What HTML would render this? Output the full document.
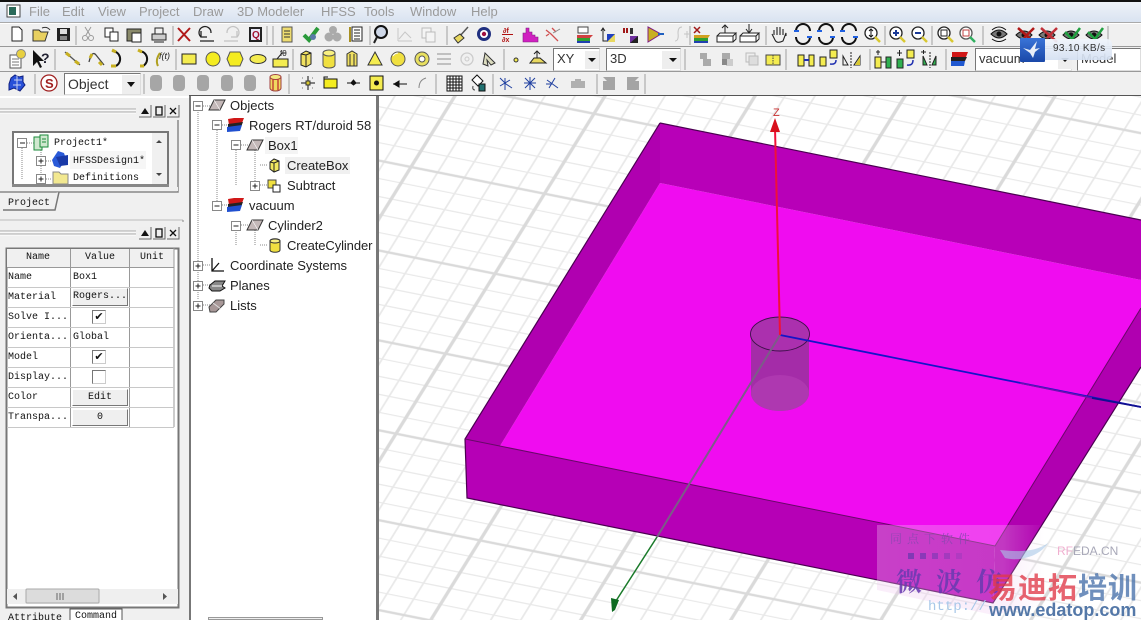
<!DOCTYPE html>
<html><head><meta charset="utf-8"><title>HFSS</title>
<style>
html,body{margin:0;padding:0;width:1141px;height:620px;overflow:hidden;background:#f0f0f0}
#r{position:absolute;left:0;top:0;width:1141px;height:620px;overflow:hidden;background:#f0f0f0;font-family:"Liberation Sans",sans-serif}
.a{position:absolute;white-space:nowrap}
.m{font:13px "Liberation Sans",sans-serif;color:#9a9a9a;top:4px}
.t{font:13px/16px "Liberation Sans",sans-serif;color:#222}
.c{font:10px/12px "Liberation Mono",monospace;color:#111}
.b{background:#efefef;border:1px solid;border-color:#fff #777 #777 #fff;box-sizing:border-box;text-align:center;font:10px/15px "Liberation Mono",monospace;color:#111}
.combo{background:#fff;border:1px solid;border-color:#777 #ddd #ddd #777;box-sizing:border-box;font:13px/20px "Liberation Sans",sans-serif;color:#333;padding-left:3px}
.cb{background:#fff;border:1px solid;border-color:#777 #ccc #ccc #777;box-sizing:border-box;width:14px;height:14px;font:bold 11px/12px "DejaVu Sans",sans-serif;text-align:center;color:#111}
</style></head><body><div id="r">

<!-- menu -->
<div class="a" style="left:0;top:0;width:1141px;height:2px;background:#111"></div>
<div class="a" style="left:0;top:2px;width:1141px;height:20px;background:linear-gradient(#eef2f8,#d9e3f1)"></div>
<div class="a" style="left:0;top:22px;width:1141px;height:1px;background:#aaa"></div>
<div class="a" style="left:0;top:23px;width:1141px;height:1px;background:#fff"></div>
<span class="a m" style="left:29px">File</span><span class="a m" style="left:62px">Edit</span><span class="a m" style="left:98px">View</span><span class="a m" style="left:139px">Project</span><span class="a m" style="left:193px">Draw</span><span class="a m" style="left:237px">3D Modeler</span><span class="a m" style="left:321px">HFSS</span><span class="a m" style="left:364px">Tools</span><span class="a m" style="left:410px">Window</span><span class="a m" style="left:471px">Help</span>

<div class="a" style="left:0;top:46px;width:1141px;height:1px;background:#999"></div>
<div class="a" style="left:0;top:71px;width:1141px;height:1px;background:#999"></div>

<!-- combos -->
<div class="a combo" style="left:553px;top:48px;width:47px;height:23px">XY</div>
<div class="a combo" style="left:606px;top:48px;width:75px;height:23px">3D</div>
<div class="a combo" style="left:975px;top:48px;width:97px;height:23px">vacuum</div>
<div class="a combo" style="left:1077px;top:48px;width:64px;height:23px">Model</div>
<div class="a combo" style="left:64px;top:73px;width:77px;height:22px;font-size:14px">Object</div>

<!-- viewport -->
<svg class="a" style="left:378px;top:96px" width="763" height="524" viewBox="378 96 763 524">
<defs>
<pattern id="g" patternUnits="userSpaceOnUse" width="5" height="5" patternTransform="matrix(26.7 5.34 -9.9 16 411 167)">
<path d="M0 1H5M0 2H5M0 3H5M0 4H5M1 0V5M2 0V5M3 0V5M4 0V5" stroke="#e9e9e9" stroke-width=".07" fill="none"/>
<path d="M0 0H5M0 5H5M0 0V5M5 0V5" stroke="#dadada" stroke-width=".13" fill="none"/>
</pattern>
<linearGradient id="wm" x1="0" x2="1" y1="0" y2="0"><stop offset="0" stop-color="#f0c8f0" stop-opacity=".32"/><stop offset=".75" stop-color="#f0c8f0" stop-opacity=".28"/><stop offset="1" stop-color="#f0c8f0" stop-opacity="0"/></linearGradient>
</defs>
<rect x="378" y="96" width="763" height="524" fill="#fff"/>
<rect x="378" y="96" width="763" height="524" fill="url(#g)"/>
<!-- box -->
<polygon points="660,183 1141,280 1141,308 995,546 500,446" fill="#f00cf0"/>
<polygon points="660,123 1141,220 1141,280 660,183" fill="#b800b8"/>
<polygon points="660,123 660,183 500,446 465,439" fill="#b000b0"/>
<polygon points="995,546 1141,308 1141,367 993,603" fill="#b000b0"/>
<polygon points="465,439 995,546 993,603 467,498" fill="#b600b6"/>
<path d="M660 123L1141 220M660 123L465 439L467 498L993 603L1141 367" fill="none" stroke="#4a0050" stroke-width="1.2"/>
<path d="M465 439L995 546L1141 308" fill="none" stroke="#680868" stroke-width="1"/>
<!-- cylinder -->
<path d="M751 335V393A29 18 0 0 0 809 393V335Z" fill="#a42ca8"/>
<ellipse cx="780" cy="393" rx="29" ry="18" fill="#ae38b0"/>
<ellipse cx="780" cy="334" rx="29.500" ry="17" fill="#ab30ae" stroke="#3c1048" stroke-width=".9"/>
<!-- axes -->
<path d="M780 335L1141 407" stroke="#1414c8" stroke-width="1.800" fill="none"/>
<path d="M1020 383L1092 398" stroke="#6a10b0" stroke-width="1.500"/>
<path d="M1092 398L1141 407" stroke="#101090" stroke-width="1.800"/>
<path d="M780 335L657 537" stroke="#7c5c88" stroke-width="2" fill="none"/>
<path d="M657 537L614 604" stroke="#1a7a2a" stroke-width="1.500" fill="none"/>
<path d="M611 598L619 600L615 610L612 612Z" fill="#0c6a20"/>
<path d="M780 335L775 128" stroke="#f01038" stroke-width="2" fill="none"/>
<path d="M775 118L780 132H770Z" fill="#d8101c"/>
<text x="773" y="116" font-family="Liberation Sans" font-size="11" fill="#c83030">Z</text>
<!-- watermark -->
<polygon points="877,525 1045,525 1045,605 993,615 877,590" fill="url(#wm)"/>
<path d="M1000 550C1020 552 1035 552 1048 543C1040 556 1020 562 1005 558Z" fill="#a8c8e8" fill-opacity=".6"/>
<text x="890" y="543" font-family="Noto Serif CJK SC,serif" font-size="12" letter-spacing="5" fill="#8848b0" fill-opacity=".85">同点下软件</text>
<g fill="#7038b0"><rect x="908" y="553" width="6" height="6" opacity=".8"/><rect x="920" y="553" width="6" height="6" opacity=".7"/><rect x="932" y="553" width="6" height="6" opacity=".55"/><rect x="944" y="553" width="6" height="6" opacity=".4"/><rect x="956" y="553" width="6" height="6" opacity=".25"/></g>
<text x="896" y="591" font-family="Noto Serif CJK SC,serif" font-size="26" font-weight="700" letter-spacing="14" fill="#6a3ab0" fill-opacity=".88">微波仿</text>
<text x="1057" y="555" font-family="Liberation Sans" font-size="12"><tspan fill="#f0b0d0">RF</tspan><tspan fill="#a8a8b8">EDA.CN</tspan></text>
<text x="928" y="610" font-family="Liberation Mono" font-size="14" fill="#a8c8e8">http://</text>
<text x="988" y="598" font-family="Noto Sans CJK SC,sans-serif" font-weight="700" font-size="29" letter-spacing="1"><tspan fill="#e03848" fill-opacity=".78">易迪拓</tspan><tspan fill="#4c74ac" fill-opacity=".8">培训</tspan></text>
<text x="989" y="616" font-family="Liberation Sans" font-weight="700" font-size="18" fill="#5478a8">www.edatop.com</text>
<rect x="378" y="96" width="1" height="524" fill="#777"/>
</svg>
<div class="a" style="left:189px;top:95px;width:952px;height:1px;background:#555"></div>

<!-- tree panel -->
<div class="a" style="left:189px;top:96px;width:189px;height:524px;background:#fff;border-left:2px solid #777;border-right:2px solid #777;box-sizing:border-box"></div>
<div class="a" style="left:208px;top:617px;width:115px;height:3px;background:#efefef;border:1px solid #999;box-sizing:border-box"></div>
<div class="a" style="left:285px;top:157px;width:65px;height:17px;background:#f0f0f0"></div>
<div class="a" style="left:265px;top:137px;width:33px;height:17px;background:#f4f4f4"></div>
<span class="a t" style="left:230px;top:98px">Objects</span>
<span class="a t" style="left:249px;top:118px;letter-spacing:.1px">Rogers RT/duroid 58</span>
<span class="a t" style="left:268px;top:138px">Box1</span>
<span class="a t" style="left:287px;top:158px">CreateBox</span>
<span class="a t" style="left:287px;top:178px">Subtract</span>
<span class="a t" style="left:249px;top:198px">vacuum</span>
<span class="a t" style="left:268px;top:218px">Cylinder2</span>
<span class="a t" style="left:287px;top:238px;letter-spacing:-.1px">CreateCylinder</span>
<span class="a t" style="left:230px;top:258px">Coordinate Systems</span>
<span class="a t" style="left:230px;top:278px">Planes</span>
<span class="a t" style="left:230px;top:298px">Lists</span>

<svg class="a" style="left:0;top:96px" width="378" height="230" viewBox="0 96 378 230">
<defs>
<g id="plus"><rect x="-4.500" y="-4.500" width="9" height="9" fill="#fff" stroke="#888"/><path d="M-2.500 0H2.500M0-2.500V2.500" stroke="#222"/></g>
<g id="minus"><rect x="-4.500" y="-4.500" width="9" height="9" fill="#fff" stroke="#888"/><path d="M-2.500 0H2.500" stroke="#222"/></g>
<g id="mat"><path d="M-8-6L-2-7H8L6-2L-7 0Z" fill="#d01818"/><path d="M-8-1L7-3L5 2L-8 3Z" fill="#222"/><path d="M-9 2L6 0L4 6L-9 7Z" fill="#2050d0"/></g>
<g id="obj"><path d="M-8 5L-3-5H8L3 5Z" fill="#c4b8b8" stroke="#333"/><path d="M-3-5L3 5" stroke="#fff" stroke-width=".6"/></g>
</defs>
<path d="M198 110V300M217 130V205M236 150V185M236 230V245M255 150V185M255 230V245M203 106H212M222 125H231M241 145H250M260 165H268M260 185H268M222 205H231M241 225H250M260 245H268M203 265H210M203 285H210M203 305H210" stroke="#888" stroke-dasharray="1 1" fill="none"/>
<use href="#minus" x="198" y="106"/><use href="#minus" x="217" y="125"/><use href="#minus" x="236" y="145"/><use href="#plus" x="255" y="186"/><use href="#minus" x="217" y="206"/><use href="#minus" x="236" y="226"/><use href="#plus" x="198" y="266"/><use href="#plus" x="198" y="286"/><use href="#plus" x="198" y="306"/>
<use href="#obj" x="217" y="105"/><use href="#mat" x="236" y="125"/><use href="#obj" x="255" y="145"/><use href="#mat" x="236" y="205"/><use href="#obj" x="255" y="225"/>
<path d="M270 162L274 159L279 161V170L274 172L270 169Z" fill="#f0e860" stroke="#222"/><path d="M274 163V172M270 162L274 163L279 161" stroke="#222" fill="none"/>
<rect x="268" y="180" width="8" height="8" fill="#f0e040" stroke="#444"/><rect x="273" y="185" width="7" height="7" fill="#fff" stroke="#222"/>
<path d="M270 241C270 238 280 238 280 241V250C280 253 270 253 270 250Z" fill="#f0e040" stroke="#333"/><ellipse cx="275" cy="241" rx="5" ry="2" fill="#f8f080" stroke="#333"/>
<path d="M212 258V271H224M212 271L219 263" stroke="#111" stroke-width="1.300" fill="none"/>
<path d="M210 285L215 281H225L222 286L225 288L220 291H212L209 288Z" fill="#888" stroke="#111"/><path d="M212 286H222" stroke="#fff"/>
<path d="M209 307L216 300H224V304L216 312H210Z" fill="#a89898" stroke="#444"/><path d="M213 303L221 309" stroke="#ddd"/>
</svg>

<!-- left dock -->
<div class="a" style="left:0;top:96px;width:189px;height:2px;background:#fff"></div>
<svg class="a" style="left:0;top:96px" width="189" height="524" viewBox="0 96 189 524">
<defs>
<g id="gr"><path d="M0 0H136M0 3H136" stroke="#aaa"/><path d="M0 1H136M0 4H136" stroke="#fff"/></g>
<g id="wbtn"><rect x="-6" y="-6" width="12" height="12" fill="#efefef"/><path d="M-6 6H6V-6" stroke="#666" fill="none"/></g>
<g id="p2"><rect x="-4.500" y="-4.500" width="9" height="9" fill="#fff" stroke="#888"/><path d="M-2.500 0H2.500M0-2.500V2.500" stroke="#222"/></g>
</defs>
<use href="#gr" y="109"/><use href="#gr" y="231"/>
<use href="#wbtn" x="145" y="111"/><use href="#wbtn" x="159" y="111"/><use href="#wbtn" x="173" y="111"/>
<use href="#wbtn" x="145" y="233"/><use href="#wbtn" x="159" y="233"/><use href="#wbtn" x="173" y="233"/>
<g id="wb"><path d="M141 114L145 108L149 114Z" fill="#111"/><rect x="156" y="107" width="6" height="8" fill="none" stroke="#111" stroke-width="1.300"/><path d="M170 108L176 114M176 108L170 114" stroke="#111" stroke-width="1.300"/></g>
<path d="M141 236L145 230L149 236Z" fill="#111"/><rect x="156" y="229" width="6" height="8" fill="none" stroke="#111" stroke-width="1.300"/><path d="M170 230L176 236M176 230L170 236" stroke="#111" stroke-width="1.300"/>
<path d="M0 220H183" stroke="#bbb"/><path d="M183 220V222" stroke="#888"/>
<!-- project frame -->
<path d="M0 192H178V120" fill="none" stroke="#888" stroke-width="1.500"/>
<rect x="13" y="132" width="155" height="53" fill="#fff" stroke="#777" stroke-width="2"/>
<rect x="152" y="133" width="15" height="51" fill="#f0f0f0"/>
<path d="M156 143L159 140L162 143Z M156 173L159 176L162 173Z" fill="#444"/>
<rect x="70" y="151" width="76" height="18" fill="#f6f6f6"/>
<path d="M22 148V180M41 146V180M27 143H34M46 161H52M46 179H52" stroke="#888" stroke-dasharray="1 1" fill="none"/>
<rect x="17.500" y="138.500" width="9" height="9" fill="#fff" stroke="#888"/><path d="M20 143H25" stroke="#222"/>
<use href="#p2" x="41" y="161"/><use href="#p2" x="41" y="179"/>
<path d="M34 137H42V150H34Z" fill="#cfe8cf" stroke="#1a8a3a"/><path d="M40 135H48V147H40Z" fill="#cfe8cf" stroke="#1a8a3a"/><path d="M42 139H46M42 142H46" stroke="#1a8a3a"/>
<path d="M58 151L64 153L66 159L60 168L54 166L52 160Z" fill="#2a5ad8"/><path d="M56 157L68 155V165L60 166Z" fill="#1a3aa8"/>
<path d="M53 172H59L61 174H68V184H53Z" fill="#f2e890" stroke="#888"/>
<rect x="12" y="184" width="157" height="3" fill="#888"/><rect x="13" y="187" width="165" height="4" fill="#f0f0f0"/>
<!-- project tab -->
<path d="M3 210H55L59 192" fill="#f0f0f0" stroke="#777" stroke-width="1.500"/>
<!-- attr frame -->
<rect x="6.500" y="248.500" width="172" height="359" fill="#fff" stroke="#777" stroke-width="2"/>
<rect x="7" y="249" width="167" height="18" fill="#f0f0f0"/>
<path d="M7 267.500H174M70.500 249V427M129.500 249V427M174 248V427" stroke="#999"/>
<path d="M7 287.500H174M7 307.500H174M7 327.500H174M7 347.500H174M7 367.500H174M7 387.500H174M7 407.500H174M7 427.500H174" stroke="#c8c8c8"/>
<!-- scrollbar -->
<rect x="7" y="589" width="171" height="15" fill="#efefef"/>
<rect x="26" y="589" width="73" height="14" rx="1" fill="#dcdcdc" stroke="#aaa"/>
<path d="M57 593V600M60 593V600M63 593V600" stroke="#666"/>
<path d="M17 593L13 596.500L17 600Z M163 593L167 596.500L163 600Z" fill="#555"/>
<!-- tabs -->
<path d="M70 620V609H122V620" fill="#fff" stroke="#555"/>
</svg>

<!-- project text -->
<span class="a c" style="left:54px;top:138px">Project1*</span>
<span class="a c" style="left:73px;top:156px">HFSSDesign1*</span>
<div class="a" style="left:14px;top:170px;width:138px;height:14px;overflow:hidden"><span class="a c" style="left:59px;top:3px">Definitions</span></div>
<span class="a c" style="left:8px;top:198px">Project</span>

<span class="a c" style="left:26px;top:252px">Name</span><span class="a c" style="left:85px;top:252px">Value</span><span class="a c" style="left:140px;top:252px">Unit</span>
<span class="a c" style="left:8px;top:272px">Name</span><span class="a c" style="left:73px;top:272px">Box1</span>
<span class="a c" style="left:8px;top:292px">Material</span>
<span class="a c" style="left:8px;top:312px">Solve I...</span>
<span class="a c" style="left:8px;top:332px">Orienta...</span><span class="a c" style="left:73px;top:332px">Global</span>
<span class="a c" style="left:8px;top:352px">Model</span>
<span class="a c" style="left:8px;top:372px">Display...</span>
<span class="a c" style="left:8px;top:392px">Color</span>
<span class="a c" style="left:8px;top:412px">Transpa...</span>
<div class="a b" style="left:72px;top:288px;width:56px;height:18px">Rogers...</div>
<div class="a b" style="left:72px;top:389px;width:56px;height:17px">Edit</div>
<div class="a b" style="left:72px;top:409px;width:56px;height:17px">0</div>
<div class="a cb" style="left:92px;top:310px">✔</div>
<div class="a cb" style="left:92px;top:350px">✔</div>
<div class="a cb" style="left:92px;top:370px"></div>
<span class="a c" style="left:8px;top:613px">Attribute</span>
<span class="a c" style="left:75px;top:611px">Command</span>

<!-- toolbars -->
<svg class="a" style="left:0;top:0" width="1141" height="96" viewBox="0 0 1141 96" font-family="Liberation Sans">
<defs>
<g id="mg"><circle cx="-1" cy="-1" r="6" fill="#fff" stroke="#222" stroke-width="1.300"/><path d="M3 3L8 8" stroke="#d8c830" stroke-width="2.500"/></g>
<rect id="pill" x="-6" y="-8" width="12" height="16" rx="4" fill="#a6a6a6"/>
<g id="rc"><path d="M-7-3A7 7 0 0 1 7-3M-7 3A7 7 0 0 0 7 3" stroke="#111" stroke-width="2" fill="none"/><path d="M-9-3H-4M4 3H9" stroke="#2060e0" stroke-width="2"/></g>
<g id="lay"><path d="M-8-7H8L6-2H-8Z" fill="#d01818"/><path d="M-9-2H7L5 2H-9Z" fill="#222"/><path d="M-9 2H5L4 7H-9Z" fill="#2058d0"/></g>
<g id="eyex"><path d="M-8 0Q0-8 8 0Q0 8-8 0Z" fill="#777" stroke="#111"/><circle r="2.500" fill="#111"/></g>
</defs>
<!-- separators -->
<path d="M76 26V45M173 26V45M267 26V45M273 26V45M370 26V45M447 26V45M690 26V45M766 26V45M885 26V45M932 26V45M983 26V45M1108 26V45
M55 49V70M176 49V70M293 49V70M504 49V70M685 49V70M786 49V70M870 49V70M946 49V70
M35 74V94M144 74V94M289 74V94M436 74V94M493 74V94M597 74V94M645 74V94" stroke="#bbb" stroke-width="1.500"/>
<!-- title icon -->
<rect x="7" y="5" width="13" height="12" fill="#fff" stroke="#444"/><rect x="9" y="7" width="7" height="8" fill="#2a6a5a"/>
<!-- ROW 1 -->
<path d="M12 27H19L22 30V41H12Z" fill="#fff" stroke="#222"/>
<path d="M33 30H39L41 32H48L45 41H33Z" fill="#e8d060" stroke="#333"/><path d="M42 28Q47 26 50 30" stroke="#333" fill="none"/>
<rect x="57" y="28" width="13" height="13" fill="#222"/><rect x="60" y="29" width="7" height="5" fill="#ddd"/><rect x="60" y="36" width="7" height="4" fill="#888"/>
<path d="M85 27L90 35M91 27L86 35" stroke="#999"/><circle cx="85" cy="38" r="2.500" fill="none" stroke="#999"/><circle cx="91" cy="38" r="2.500" fill="none" stroke="#999"/>
<rect x="105" y="28" width="8" height="9" fill="#fff" stroke="#222"/><rect x="110" y="32" width="8" height="9" fill="#fff" stroke="#222"/>
<rect x="127" y="29" width="14" height="12" fill="#8a8a6a" stroke="#222"/><rect x="132" y="33" width="9" height="9" fill="#fff" stroke="#222"/>
<path d="M152 34H166V40H152Z" fill="#ccc" stroke="#222"/><path d="M155 34V28H163V34M154 42H164" stroke="#222" fill="none"/>
<path d="M178 28L190 41M190 28L178 41" stroke="#b01818" stroke-width="2"/>
<path d="M201 37A6 6 0 1 1 211 33M201 31V37H207M200 41H214" stroke="#222" stroke-width="1.300" fill="none"/>
<path d="M237 37A6 6 0 1 0 227 33M237 31V37H231M224 41H238" stroke="#c4c4c4" stroke-width="1.300" fill="none"/>
<rect x="249" y="27" width="13" height="15" fill="#222"/><rect x="251" y="29" width="9" height="11" fill="#e8e8f8"/><text x="252" y="38" font-size="10" font-weight="700" fill="#a01030">Q</text>
<rect x="282" y="27" width="10" height="15" fill="#eedc70" stroke="#555"/><path d="M284 31H290M284 34H290M284 37H290" stroke="#333"/>
<path d="M304 35L309 40L318 28" stroke="#2a9a3a" stroke-width="4" fill="none"/><circle cx="313" cy="37" r="3" fill="#5a7aa8"/>
<circle cx="333" cy="30" r="4" fill="#aaa"/><circle cx="329" cy="37" r="4.500" fill="#aaa"/><circle cx="337" cy="37" r="4.500" fill="#aaa"/>
<rect x="352" y="27" width="10" height="14" fill="#fff" stroke="#222"/><path d="M354 30H360M354 33H360M354 36H360M354 39H360" stroke="#222"/><path d="M350 27V42" stroke="#a89020" stroke-width="2"/>
<circle cx="381" cy="32" r="6" fill="#cfd8e8" stroke="#111" stroke-width="2"/><path d="M377 37L374 43" stroke="#222" stroke-width="2"/>
<path d="M398 41V28M398 41H412M399 39L405 32L411 38" stroke="#c8c8c8" fill="none"/>
<rect x="422" y="28" width="9" height="10" fill="#f4f4f4" stroke="#bbb"/><rect x="426" y="32" width="9" height="10" fill="#f4f4f4" stroke="#bbb"/>
<path d="M468 27L459 37" stroke="#555" stroke-width="1.500"/><path d="M454 38L460 34L464 38L458 43Z" fill="#e8d860" stroke="#333"/>
<circle cx="484" cy="34" r="7" fill="#203080"/><circle cx="484" cy="34" r="4" fill="#fff"/><circle cx="484" cy="34" r="2.200" fill="#a01040"/>
<text x="503" y="33" font-size="7" font-weight="700" fill="#b01010">∂f</text><path d="M502 34.500H513" stroke="#b01010"/><text x="502" y="42" font-size="7" font-weight="700" fill="#b01010">∂x</text>
<path d="M523 42V33H526V28H529V32H532V35H535V37H538V42Z" fill="#d020c0" stroke="#802080" stroke-width=".6"/>
<path d="M546 30L551 34L558 41M546 36L549 34M552 28L556 32" stroke="#d05050" stroke-width="1.300" fill="none"/><path d="M553 33L560 29" stroke="#888"/>
<rect x="578" y="27" width="10" height="6" fill="#fff" stroke="#444"/><path d="M577 35H593L590 38H577Z" fill="#d04040"/><path d="M577 38H590V41H577Z" fill="#30a030"/><path d="M577 41H590V43H577Z" fill="#2040b0"/>
<path d="M603 28V41H610M601 31L603 28L605 31" stroke="#222" fill="none"/><path d="M607 34L615 34V42H607Z" fill="#2040c0"/><path d="M615 34V42H607Z" fill="#e8d860"/>
<path d="M624 28V33M627 28V33" stroke="#a01818" stroke-width="2"/><rect x="630" y="28" width="3" height="6" fill="#333"/><path d="M630 36H638V43H630Z" fill="#7030a0"/><path d="M638 36V43H630Z" fill="#222"/>
<path d="M648 27L661 34L648 42Z" fill="#c8b020" stroke="#802080"/><path d="M658 34H664" stroke="#2060c0" stroke-width="2"/>
<path d="M675 41Q679 41 678 33Q678 27 682 27M684 34H691M687 31V38" stroke="#c4c4c4" fill="none"/>
<path d="M694 27L700 33M700 27L694 33" stroke="#a01818" stroke-width="1.500"/><path d="M694 35H710L708 38H694Z" fill="#d0a020"/><path d="M694 38H708V41H694Z" fill="#30a030"/><path d="M694 41H708V43H694Z" fill="#2040b0"/>
<path d="M717 36H733V42H717ZM717 36L720 33H736L733 36M736 33V39L733 42" fill="#fff" stroke="#222"/><path d="M725 25V33M722 28L725 25L728 28" stroke="#222" fill="none"/>
<path d="M740 36H756V42H740ZM740 36L743 33H759L756 36M759 33V39L756 42" fill="#fff" stroke="#222"/><path d="M749 24V32M746 29L749 33L752 29" stroke="#222" fill="none"/>
<path d="M774 35V30M777 35V27M780 35V27M783 35V29M786 36V33L783 41Q777 44 775 40L772 34" stroke="#222" fill="none" stroke-width="1.100"/>
<use href="#rc" x="803" y="34"/><use href="#rc" x="826" y="34"/><use href="#rc" x="849" y="34"/>
<use href="#mg" x="872" y="34"/><path d="M871 29V37M869 31L871 29L873 31M869 35L871 37L873 35" stroke="#111" fill="none"/>
<use href="#mg" x="897" y="34"/><path d="M893 33H899M896 30V36" stroke="#1a3a98" stroke-width="2"/>
<use href="#mg" x="919" y="34"/><path d="M915 33H921" stroke="#1a3a98" stroke-width="2"/>
<use href="#mg" x="945" y="34"/><rect x="941" y="30" width="6" height="6" fill="none" stroke="#222"/>
<circle cx="966" cy="33" r="6" fill="#fff" stroke="#555" stroke-width="1.300"/><rect x="963" y="30" width="6" height="6" fill="none" stroke="#c04040"/><path d="M970 37L975 42" stroke="#30b060" stroke-width="2.500"/>
<use href="#eyex" x="999" y="34"/><path d="M992 30Q999 24 1006 30M992 39Q999 44 1006 39" stroke="#111" fill="none"/>
<use href="#eyex" x="1024" y="35"/><path d="M1018 28L1034 42M1034 28L1024 38" stroke="#b01818" stroke-width="2.500"/>
<use href="#eyex" x="1047" y="35"/><path d="M1041 28L1057 42M1057 28L1047 38" stroke="#c03038" stroke-width="2.500"/>
<use href="#eyex" x="1071" y="35"/><path d="M1065 32L1072 39L1080 28" stroke="#20a040" stroke-width="2.500" fill="none"/>
<use href="#eyex" x="1094" y="35"/><path d="M1088 32L1095 39L1103 28" stroke="#20a040" stroke-width="2.500" fill="none"/>
<!-- ROW 2 -->
<rect x="10" y="55" width="11" height="13" fill="#fff" stroke="#555"/><path d="M12 59H19M12 62H19M12 65H19" stroke="#777"/><circle cx="21" cy="54" r="4.500" fill="#e8d040" stroke="#888"/>
<path d="M33 50V66L37 62L40 68L42 67L39 61H44Z" fill="#111"/><text x="41" y="63" font-size="14" font-weight="700" fill="#223">?</text>
<path d="M65 52L80 65" stroke="#555" stroke-width="1.300"/><path d="M66 53L70 56M75 61L79 64" stroke="#c8b020" stroke-width="3"/>
<path d="M89 62Q92 50 96 55T104 65" stroke="#444" stroke-width="1.300" fill="none"/><path d="M90 58L92 54M99 62L102 65" stroke="#c8b020" stroke-width="3"/>
<path d="M112 51A8 8 0 0 1 116 66" stroke="#111" stroke-width="2" fill="none"/><path d="M112 50L116 52M111 66L116 66" stroke="#c8b020" stroke-width="3"/>
<path d="M139 51A8 8 0 0 1 143 66" stroke="#111" stroke-width="2" fill="none"/><path d="M138 50L142 52M140 66L144 66" stroke="#c8b020" stroke-width="3"/>
<text x="159" y="59" font-size="9" fill="#222" font-style="italic">f(t)</text><path d="M158 66Q155 60 160 53" stroke="#b0a020" stroke-width="2" fill="none"/>
<rect x="182" y="54" width="14" height="10" fill="#f4ec50" stroke="#222"/>
<circle cx="213" cy="59" r="7" fill="#f4ec20" stroke="#555"/>
<path d="M230 52H240L243 59L240 66H230L227 59Z" fill="#f4ec20" stroke="#555"/>
<ellipse cx="258" cy="59" rx="8" ry="4.500" fill="#f4ec50" stroke="#333"/>
<rect x="273" y="59" width="15" height="8" fill="#f4ec50" stroke="#222"/><path d="M277 59L282 53H286" stroke="#222" fill="none"/><text x="280" y="56" font-size="8" fill="#222">f0</text>
<g fill="#f0e060" stroke="#222"><path d="M301 54L306 51L311 53V64L306 67L301 65Z"/></g><path d="M306 55V67M301 54L306 55L311 53" stroke="#222" fill="none"/>
<path d="M323 53V65C323 69 335 69 335 65V53Z" fill="#f0e040" stroke="#555"/><ellipse cx="329" cy="53" rx="6" ry="3" fill="#f8f080" stroke="#555"/>
<path d="M347 54V66H357V54L352 51Z" fill="#f0e060" stroke="#333"/><path d="M350 54V66M354 54V66" stroke="#333"/>
<path d="M375 52L382 65H368Z" fill="#f4ec50" stroke="#333"/>
<circle cx="398" cy="59" r="7" fill="#f0e040" stroke="#555"/><path d="M393 56A6 6 0 0 1 398 53" stroke="#fff" fill="none"/>
<circle cx="422" cy="59" r="7" fill="#e8e060" stroke="#555"/><circle cx="422" cy="59" r="3" fill="#fff" stroke="#555"/>
<path d="M437 54H451M437 59H451M437 64H451" stroke="#c0c0c0" stroke-width="2"/>
<circle cx="467" cy="59" r="6" fill="none" stroke="#ccc" stroke-width="1.300"/><circle cx="467" cy="59" r="2" fill="none" stroke="#ccc"/>
<path d="M483 64L485 53L495 63L491 65L487 60L488 66Z" fill="#dcdcc0" stroke="#333"/>
<circle cx="516" cy="60" r="2" fill="#f4ec50" stroke="#333"/>
<path d="M530 63H546L540 58H534Z" fill="#e8d860" stroke="#222"/><path d="M537 58V51M534 54L537 51L540 54" stroke="#222" fill="none"/>
<rect x="585" y="51" width="14" height="18" fill="#eee"/><path d="M588 58H596L592 62Z" fill="#111"/>
<rect x="662" y="51" width="18" height="18" fill="#eee"/><path d="M669 58H677L673 62Z" fill="#111"/>
<path d="M700 53H707V59H700ZM703 59H711V66H703Z" fill="#aaa"/>
<path d="M722 53H730V59H722Z" fill="#aaa"/><path d="M726 59H733V66H726Z" fill="#ccc"/><rect x="722" y="59" width="5" height="6" fill="#888"/>
<rect x="746" y="53" width="9" height="9" fill="#eee" stroke="#bbb"/><rect x="749" y="56" width="9" height="9" fill="#ddd" stroke="#bbb"/>
<rect x="766" y="55" width="14" height="10" fill="#f4ec50" stroke="#444"/><path d="M773 55V65" stroke="#444" stroke-dasharray="1.500 1"/>
<rect x="798" y="55" width="6" height="11" fill="#f4ec50" stroke="#222"/><rect x="809" y="55" width="5" height="11" fill="#f4ec50" stroke="#222"/><path d="M804 60H809" stroke="#2030b0" stroke-width="2"/>
<rect x="820" y="57" width="6" height="9" fill="#f4ec50" stroke="#222"/><rect x="830" y="50" width="7" height="8" fill="#f4ec50" stroke="#222"/><path d="M836 60Q836 65 830 64" stroke="#2030b0" fill="none" stroke-width="1.500"/>
<path d="M843 65V56L848 65ZM860 65V56L854 65Z" fill="none" stroke="#222"/><path d="M851 52V68" stroke="#222" stroke-dasharray="2 1"/><path d="M855 65L860 57V65Z" fill="#d8c830"/>
<rect x="875" y="57" width="6" height="11" fill="#f4ec50" stroke="#222"/><rect x="886" y="57" width="5" height="11" fill="#30b050" stroke="#222"/><path d="M881 62H886M878 50V55M876 52H880" stroke="#222"/>
<rect x="897" y="59" width="6" height="9" fill="#30b050" stroke="#222"/><rect x="907" y="50" width="7" height="8" fill="#f4ec50" stroke="#222"/><path d="M913 60Q913 66 907 65" stroke="#2030b0" fill="none" stroke-width="1.500"/><path d="M897 53H902M899.500 50V56" stroke="#222"/>
<path d="M923 65V56L927 65ZM936 65V56L932 65Z" fill="#30b050" stroke="#222"/><path d="M930 52V68" stroke="#222" stroke-dasharray="2 1"/><path d="M921 52H926M923.500 50V54" stroke="#222"/>
<use href="#lay" x="960" y="59"/>
<rect x="1058" y="51" width="14" height="18" fill="#eee"/><path d="M1061 58H1069L1065 62Z" fill="#111"/>
<!-- ROW 3 -->
<path d="M11 78L15 75L19 77L23 76V82L25 85L20 91L14 88L9 90V84Z" fill="#2850d8" stroke="#102080"/><path d="M14 80H22M13 85H21M17 75V90" stroke="#c8d0f0"/>
<circle cx="49" cy="83" r="8" fill="#fff" stroke="#a02020" stroke-width="1.300"/><text x="45" y="88" font-size="13" font-weight="700" fill="#a02020">S</text>
<rect x="122" y="75" width="18" height="19" fill="#eee"/><path d="M127 82H135L131 87Z" fill="#111"/>
<use href="#pill" x="156" y="83"/><use href="#pill" x="179" y="83"/><use href="#pill" x="203" y="83"/><use href="#pill" x="227" y="83"/><use href="#pill" x="250" y="83"/>
<path d="M270 77V88C270 92 281 92 281 88V77Z" fill="#f0d860" stroke="#a04040"/><ellipse cx="275.500" cy="77" rx="5.500" ry="2.500" fill="#f4e880" stroke="#a04040"/><path d="M273 79V90M278 79V90" stroke="#c03030" stroke-width="1.300"/>
<path d="M308 76V81M308 85V90M301 83H306M310 83H315" stroke="#111"/><path d="M302 78H304M312 78H314M302 88H304M312 88H314" stroke="#777" stroke-dasharray="1 1"/><rect x="306" y="81" width="4" height="4" fill="#d8c830" stroke="#333"/>
<rect x="324" y="79" width="13" height="9" fill="#f4ec20" stroke="#111"/><path d="M324 79V77H328" stroke="#111" fill="none"/>
<path d="M347 83H360M351 83L353.500 80L356 83L353.500 85Z" stroke="#111" fill="#111"/>
<rect x="370" y="76" width="13" height="14" fill="#f4ec50" stroke="#111"/><circle cx="376.500" cy="83" r="2.500" fill="#111"/>
<path d="M393 84H407M394 84L399 81V87Z" stroke="#111" fill="#111"/>
<path d="M419 88Q419 80 426 78" stroke="#888" fill="none"/>
<g stroke="#111"><rect x="447" y="76" width="15" height="15" fill="#fff"/><path d="M450 76V91M453 76V91M456 76V91M459 76V91M447 79H462M447 82H462M447 85H462M447 88H462"/></g>
<path d="M472 80L477 75L483 81L478 86Z" fill="#fff" stroke="#111"/><rect x="479" y="84" width="6" height="7" fill="#207070" stroke="#111"/><path d="M473 86Q472 90 475 90" stroke="#444" fill="none"/>
<g stroke="#2040a0" fill="none"><path d="M500 78L506 84L512 88M505 78V90M500 86L510 80"/></g>
<g stroke="#2040a0" fill="none"><path d="M524 83H536M530 77V90M525 78L535 88M535 78L525 88"/></g>
<g stroke="#2040a0" fill="none"><path d="M547 80L558 88M549 88L555 78M546 84H552"/></g>
<path d="M571 88V81H575V79H581V81H585V88Z" fill="#b0b0b0"/>
<path d="M603 77H615V90H603Z" fill="#a4a4a4"/><path d="M603 77L607 81H603Z" fill="#eee"/>
<path d="M627 77H639V90H627Z" fill="#a4a4a4"/><path d="M639 77L635 81H639Z" fill="#eee"/>
</svg>

<!-- popup -->
<div class="a" style="left:1044px;top:39px;width:68px;height:21px;background:linear-gradient(#f0f5fc,#d4e0f2);border-radius:0 5px 5px 0;opacity:.92"></div>
<span class="a" style="left:1053px;top:43px;font:10px/12px 'Liberation Sans',sans-serif;color:#333;letter-spacing:.35px">93.10 KB/s</span>
<svg class="a" style="left:1020px;top:38px" width="25" height="24" viewBox="0 0 25 24">
<defs><linearGradient id="bl" x1="0" y1="0" x2="0" y2="1"><stop offset="0" stop-color="#3a74d8"/><stop offset="1" stop-color="#1a48a8"/></linearGradient></defs>
<rect width="25" height="24" rx="1" fill="url(#bl)"/>
<path d="M3 10L10 12L17 3L15 11L20 10L15 14L13 20L10 15Z" fill="#e8eef8"/>
</svg>
</div></body></html>
